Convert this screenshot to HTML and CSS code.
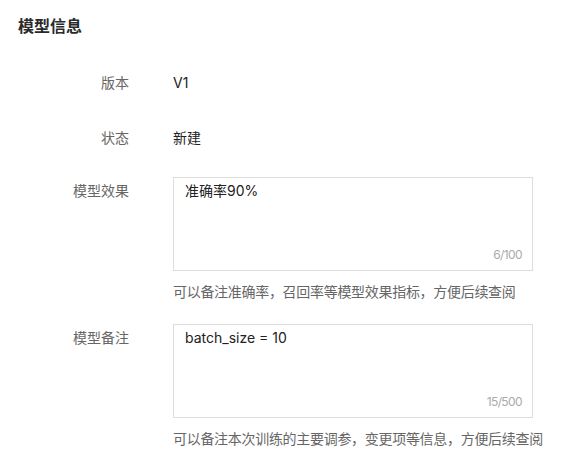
FILE: index.html
```html
<!DOCTYPE html>
<html lang="zh">
<head>
    <meta charset="UTF-8">
    <meta name="viewport" content="width=device-width, initial-scale=1.0">
    <title>模型信息</title>
    <link rel="stylesheet" href="styles.css">
</head>
<body>

    <h3 class="title">模型信息</h3>

    <div class="row">
        <label class="label">版本</label>
        <div class="value">V1</div>
    </div>

    <div class="row">
        <label class="label">状态</label>
        <div class="value">新建</div>
    </div>

    <div class="row field">
        <label class="label">模型效果</label>
        <div class="control">
            <div class="box">
                <textarea class="input" maxlength="100">准确率90%</textarea>
                <span class="count">6/100</span>
            </div>
            <div class="extra">可以备注准确率，召回率等模型效果指标，方便后续查阅</div>
        </div>
    </div>

    <div class="row field">
        <label class="label">模型备注</label>
        <div class="control">
            <div class="box">
                <textarea class="input" maxlength="500">batch_size = 10</textarea>
                <span class="count">15/500</span>
            </div>
            <div class="extra">可以备注本次训练的主要调参，变更项等信息，方便后续查阅</div>
        </div>
    </div>

</body>
</html>
```

FILE: styles.css
```css
body {
    margin: 0;
    padding: 0 18px;
    font-family: Inter, "Noto Sans CJK SC", sans-serif;
    font-size: 14px;
    line-height: 22px;
    color: #222;
    background: #fff;
}

.title {
    margin: 14px 0 29px;
    font-size: 16px;
    line-height: 24px;
    font-weight: 700;
    color: #2a2a2a;
}

.row {
    display: flex;
    align-items: center;
    gap: 44px;
    min-height: 32px;
    margin-bottom: 23px;
}

.row.field {
    align-items: flex-start;
    margin-bottom: 21px;
}

.label {
    width: 111px;
    flex-shrink: 0;
    text-align: right;
    color: #666;
}

.field .label {
    padding-top: 3px;
}

.control {
    width: 360px;
}

.box {
    position: relative;
    height: 94px;
    border: 1px solid #ddd;
    box-sizing: border-box;
}

.input {
    display: block;
    width: 100%;
    height: 100%;
    box-sizing: border-box;
    margin: 0;
    padding: 2px 11px;
    border: none;
    outline: none;
    resize: none;
    font: inherit;
    color: #222;
    background: transparent;
}

.count {
    position: absolute;
    right: 10px;
    bottom: 4px;
    font-size: 12px;
    letter-spacing: -0.6px;
    color: #aaa;
}

.extra {
    margin-top: 10px;
    white-space: nowrap;
    letter-spacing: -0.3px;
    color: #666;
}
```
